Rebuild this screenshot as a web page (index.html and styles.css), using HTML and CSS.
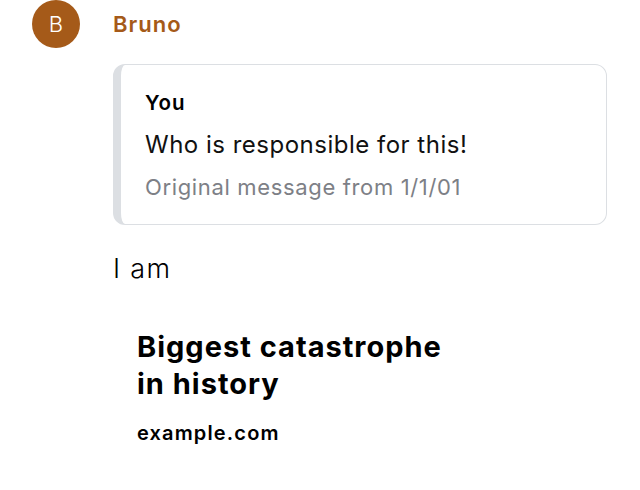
FILE: index.html
```html
<!DOCTYPE html>
<html>
<head>
<meta charset="utf-8">
<link rel="stylesheet" href="styles.css">
</head>
<body>
<div class="message">
  <div class="avatar">B</div>
  <div class="content">
    <div class="sender">Bruno</div>
    <div class="quote">
      <div class="quote-author">You</div>
      <div class="quote-text">Who is responsible for this!</div>
      <div class="quote-meta">Original message from 1/1/01</div>
    </div>
    <div class="body-text">I am</div>
    <div class="preview">
      <div class="preview-title">Biggest catastrophe in history</div>
      <div class="preview-domain">example.com</div>
    </div>
  </div>
</div>
</body>
</html>
```
FILE: styles.css
```css
html, body {
  margin: 0;
  padding: 0;
  background: #ffffff;
}
body {
  font-family: "Inter", "Noto Sans", sans-serif;
  color: #111111;
}
.message {
  display: flex;
  gap: 33px;
  padding: 0 33px 0 32px;
}
.avatar {
  flex: 0 0 48px;
  width: 48px;
  height: 48px;
  border-radius: 50%;
  background: #a55a19;
  color: #ffffff;
  font-size: 22px;
  font-weight: 300;
  display: flex;
  align-items: center;
  justify-content: center;
}
.content {
  flex: 1;
  display: flex;
  flex-direction: column;
}
.sender {
  font-size: 22px;
  line-height: 48px;
  font-weight: 600;
  letter-spacing: 1px;
  color: #a55a19;
}
.quote {
  margin-top: 16px;
  border: 1px solid #dcdfe3;
  border-left: 8px solid #dcdfe3;
  border-radius: 12px;
  padding: 24px 24px 22px 24px;
  display: flex;
  flex-direction: column;
}
.quote-author {
  font-size: 20.5px;
  line-height: 28px;
  font-weight: 600;
  letter-spacing: 1px;
  color: #000000;
}
.quote-text {
  margin-top: 12px;
  font-size: 24px;
  line-height: 32px;
  font-weight: 400;
  letter-spacing: 0.5px;
  color: #111111;
}
.quote-meta {
  margin-top: 11px;
  font-size: 22px;
  line-height: 30px;
  letter-spacing: 0.65px;
  color: #7d8086;
}
.body-text {
  margin-top: 26px;
  font-size: 27px;
  line-height: 36px;
  font-weight: 300;
  letter-spacing: 1.3px;
  color: #000000;
}
.preview {
  margin-top: 41px;
  padding-left: 24px;
  display: flex;
  flex-direction: column;
}
.preview-title {
  max-width: 330px;
  font-size: 29px;
  line-height: 37px;
  font-weight: 700;
  letter-spacing: 1px;
  color: #000000;
}
.preview-domain {
  margin-top: 18px;
  font-size: 20px;
  line-height: 26px;
  font-weight: 600;
  letter-spacing: 1.15px;
  color: #000000;
}
```
